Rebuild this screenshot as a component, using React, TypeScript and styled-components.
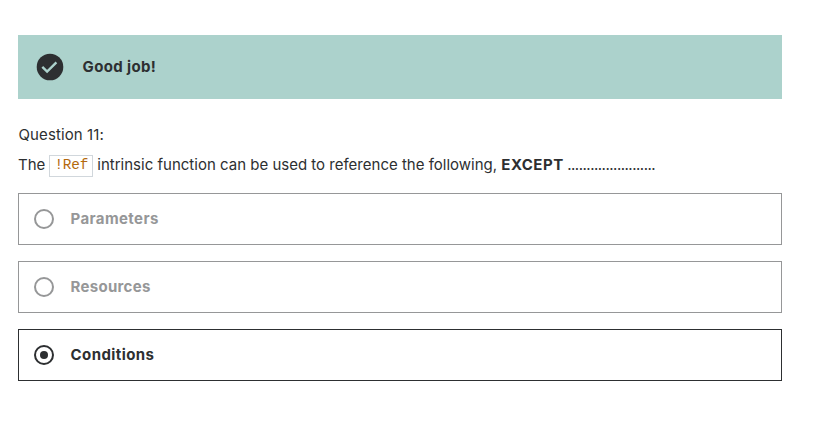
import React from 'react';
import styled, { createGlobalStyle } from 'styled-components';

const Global = createGlobalStyle`
  * { box-sizing: border-box; }
  body { margin: 0; background: #fff; color: #2d2f31; font: 400 15px/22px Inter, "Liberation Sans", sans-serif; }
`;
const Page = styled.main`
  width: 782px;
  padding: 35px 0 0 18px;
`;
const Banner = styled.div`
  height: 64px;
  padding-left: 18px;
  display: flex;
  align-items: center;
  gap: 18.6px;
  background: #acd2cc;
`;
const Icon = styled.svg`
  display: block;
  flex: none;
`;
const Label = styled.span<{ $tracking: number }>`
  font-size: 15px;
  font-weight: 700;
  letter-spacing: ${p => p.$tracking}px;
  white-space: nowrap;
`;
const Heading = styled.div`
  margin-top: 25px;
  padding-left: 0.5px;
  letter-spacing: 0.1px;
`;
const Prompt = styled.div`
  display: flex;
  align-items: center;
  height: 24px;
  margin-top: 7px;
  white-space: pre;
`;
const Code = styled.code`
  height: 22px;
  width: 44px;
  margin: 1px 4px 0;
  border: 1px solid #d1d7dc;
  color: #b4690e;
  text-align: center;
  font: 14.4px/18px "Liberation Mono", monospace;
  letter-spacing: -0.2px;
`;
const Sentence = styled.span`
  letter-spacing: 0.005px;
`;
const Strong = styled.strong`
  letter-spacing: 0.5px;
`;
const Blank = styled.span`
  margin-left: 3.5px;
  letter-spacing: -0.5px;
`;
const Options = styled.div`
  display: grid;
  gap: 16px;
  margin-top: 16px;
`;
const Option = styled.div<{ $selected: boolean }>`
  height: 52px;
  display: flex;
  align-items: center;
  gap: 16.5px;
  padding-left: 15px;
  border: 1px solid ${p => p.$selected ? '#2d2f31' : '#969798'};
  color: ${p => p.$selected ? '#2d2f31' : '#969798'};
`;

const choices = [
  { text: 'Parameters', tracking: 0.4 },
  { text: 'Resources', tracking: 0.3 },
  { text: 'Conditions', tracking: 0.43 },
];

export default function App() {
  return (
    <>
      <Global />
      <Page>
        <Banner>
          <Icon width="28" height="28" viewBox="0 0 28 28">
            <circle cx="14" cy="14" r="13.3" fill="#2d2f31" />
            <path d="m6.3 13.8 4.8 4.8 9.3-9.3" fill="none" stroke="#acd2cc" strokeWidth="2.4" />
          </Icon>
          <Label $tracking={0.35}>Good job!</Label>
        </Banner>
        <Heading>Question 11:</Heading>
        <Prompt>
          <span>The</span>
          <Code>!Ref</Code>
          <Sentence>intrinsic function can be used to reference the following, </Sentence>
          <Strong>EXCEPT</Strong>
          <Blank>.......................</Blank>
        </Prompt>
        <Options>
          {choices.map((choice, i) => (
            <Option key={choice.text} $selected={i === 2}>
              <Icon width="20" height="20" viewBox="0 0 20 20">
                <circle cx="10" cy="10" r="9" fill="none" stroke="currentColor" strokeWidth="2" />
                {i === 2 && <circle cx="10" cy="10" r="4" fill="currentColor" />}
              </Icon>
              <Label $tracking={choice.tracking}>{choice.text}</Label>
            </Option>
          ))}
        </Options>
      </Page>
    </>
  );
}
